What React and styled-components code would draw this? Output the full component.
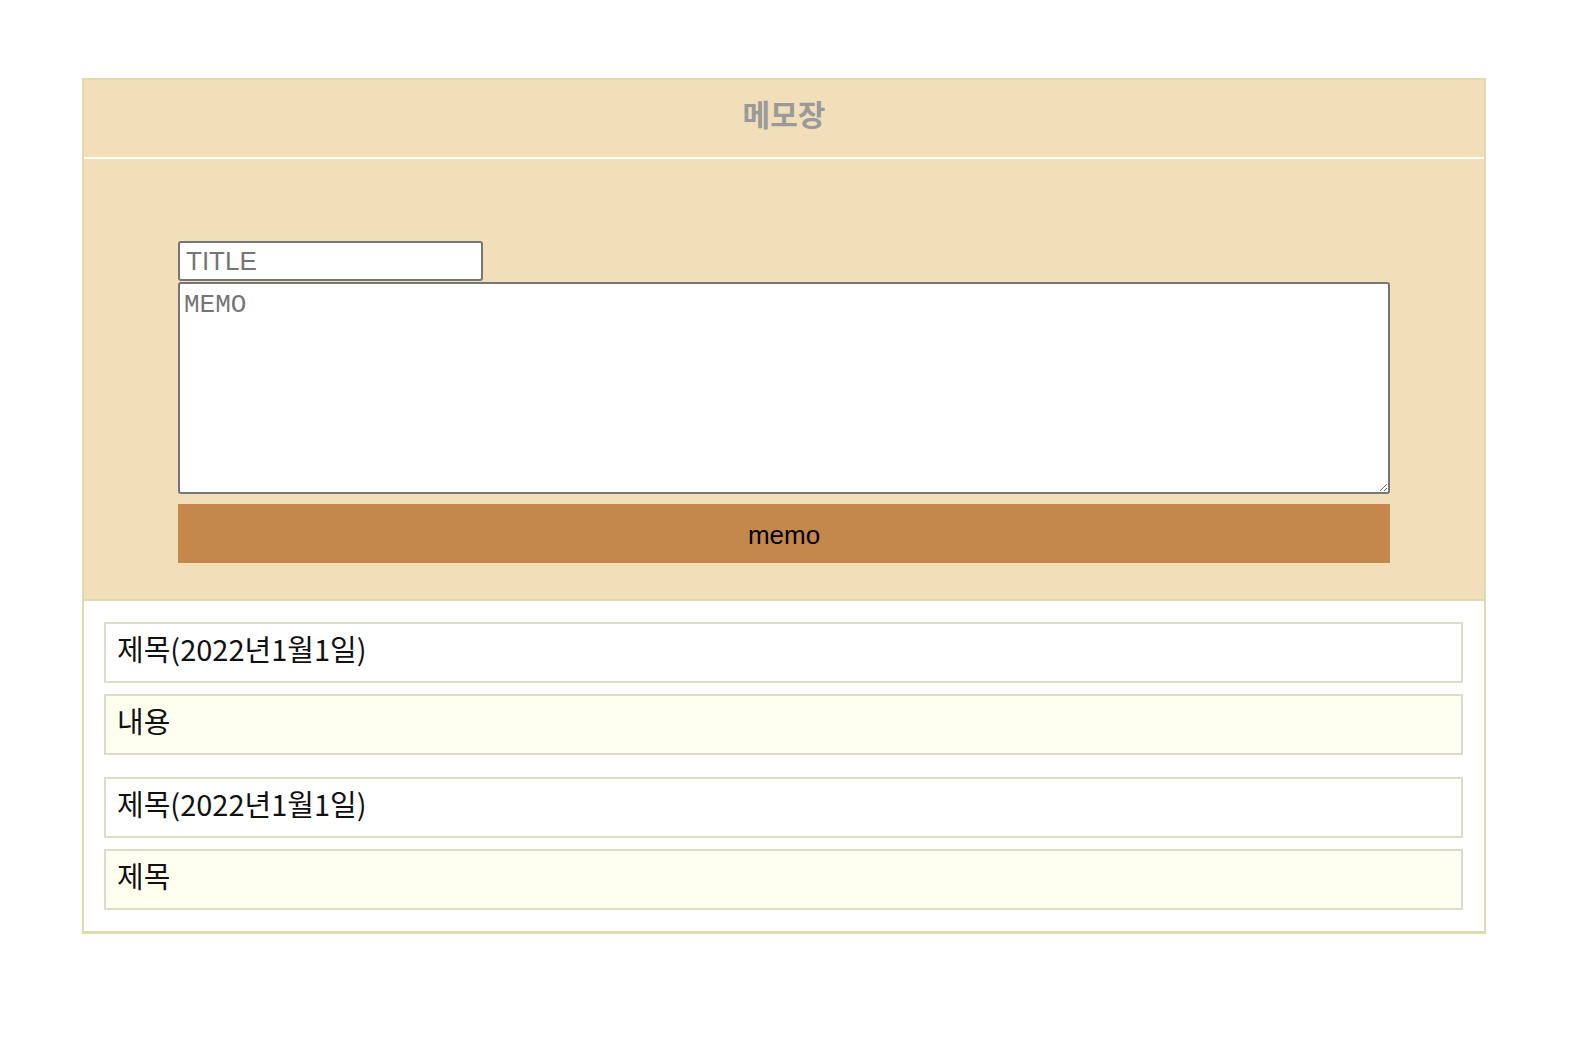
import React, { useState } from "react";
import styled, { createGlobalStyle } from "styled-components";

const GlobalStyle = createGlobalStyle`
  body {
    margin: 0;
    background: #fff;
    font-family: "Liberation Sans", Arial, sans-serif;
  }
`;

const Page = styled.main`
  padding: 78px 0 0 82px;
`;

const Board = styled.section`
  width: 1404px;
  box-sizing: border-box;
  border: 2px solid #dedcae;
  border-bottom-width: 3px;
`;

const Header = styled.header`
  height: 79px;
  box-sizing: border-box;
  padding-bottom: 11px;
  display: flex;
  align-items: center;
  justify-content: center;
  background: #f0dfb9;
  border-bottom: 2px solid #fff;
  h1 {
    margin: 0;
    font-family: "Noto Sans CJK KR", "Noto Sans", sans-serif;
    font-size: 30px;
    font-weight: 700;
    color: #9a9a9a;
  }
`;

const Form = styled.form`
  display: flex;
  flex-direction: column;
  padding: 82px 94px 36px;
  background: #f0dfb9;
  border-bottom: 2px solid #dedcae;
`;

const TitleInput = styled.input`
  width: 305px;
  height: 40px;
  box-sizing: border-box;
  padding: 0 6px;
  border: 2px solid #767676;
  border-radius: 3px;
  font-family: "Liberation Sans", Arial, sans-serif;
  font-size: 26px;
  background: #fff;
  &::placeholder {
    color: #757575;
  }
`;

const MemoArea = styled.textarea`
  margin-top: 1px;
  height: 212px;
  box-sizing: border-box;
  padding: 6px 4px;
  border: 2px solid #767676;
  border-radius: 3px;
  font-family: "Liberation Mono", "Courier New", monospace;
  font-size: 26px;
  line-height: 1.2;
  background: #fff;
  &::placeholder {
    color: #757575;
  }
`;

const SubmitButton = styled.button`
  margin-top: 10px;
  height: 59px;
  padding-top: 4px;
  border: none;
  background: #c4884d;
  color: #000;
  font-family: "Liberation Sans", Arial, sans-serif;
  font-size: 26px;
  cursor: pointer;
`;

const List = styled.div`
  display: flex;
  flex-direction: column;
  gap: 22px;
  padding: 21px 21px 21px 20px;
  background: #fff;
`;

const Entry = styled.article`
  display: flex;
  flex-direction: column;
  gap: 11px;
`;

const Cell = styled.div`
  height: 61px;
  box-sizing: border-box;
  display: flex;
  align-items: center;
  padding: 0 11px 9px;
  border: 2px solid #dcdcc8;
  background: ${(p) => (p.$body ? "#fffff0" : "#fff")};
  font-family: "Noto Sans CJK KR", "Noto Sans", sans-serif;
  font-size: 29px;
  color: #111;
`;

const memos = [
  { title: "제목(2022년1월1일)", body: "내용" },
  { title: "제목(2022년1월1일)", body: "제목" },
];

export default function App() {
  const [title, setTitle] = useState("");
  const [memo, setMemo] = useState("");
  return (
    <Page>
      <GlobalStyle />
      <Board>
        <Header>
          <h1>메모장</h1>
        </Header>
        <Form onSubmit={(e) => e.preventDefault()}>
          <TitleInput
            placeholder="TITLE"
            value={title}
            onChange={(e) => setTitle(e.target.value)}
          />
          <MemoArea
            placeholder="MEMO"
            value={memo}
            onChange={(e) => setMemo(e.target.value)}
          />
          <SubmitButton type="submit">memo</SubmitButton>
        </Form>
        <List>
          {memos.map((m, i) => (
            <Entry key={i}>
              <Cell>{m.title}</Cell>
              <Cell $body>{m.body}</Cell>
            </Entry>
          ))}
        </List>
      </Board>
    </Page>
  );
}
